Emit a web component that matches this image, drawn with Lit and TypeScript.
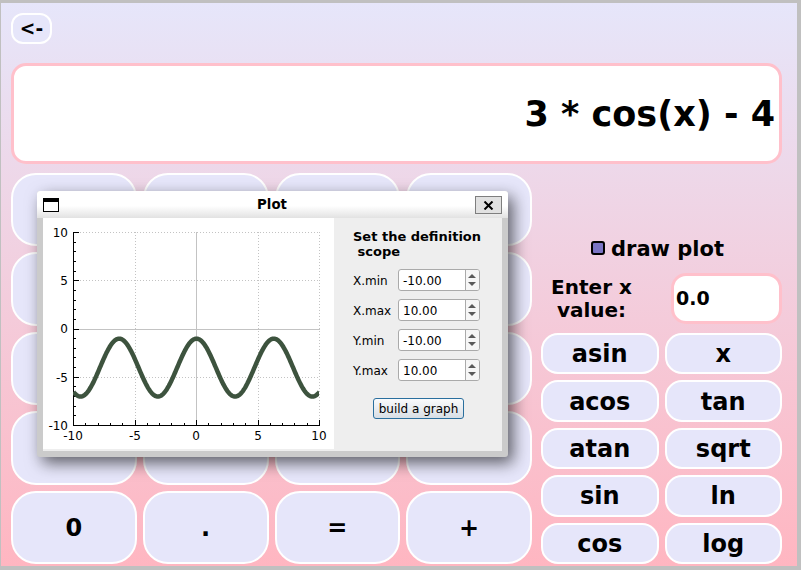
import { LitElement, html, svg, css } from "lit";
import { customElement, property } from "lit/decorators.js";

const X0 = 30.5, Y0 = 14.5, W = 246, H = 193;
const px = (v: number) => X0 + ((v + 10) / 20) * W;
const py = (v: number) => Y0 + ((10 - v) / 20) * H;
const snap = (v: number) => Math.floor(v) + 0.5;

@customElement("function-plot")
class FunctionPlot extends LitElement {
  static styles = css`
    :host { display: block; width: 291px; height: 231px; background: #fff; }
    svg { display: block; }
    text { font: 12px "DejaVu Sans", sans-serif; fill: #000; }
    .grid { stroke: #c3c3c3; stroke-dasharray: 1 2; }
    .zero { stroke: #c3c3c3; }
    .axis { stroke: #000; }
    .curve { fill: none; stroke: #3d533e; stroke-width: 4.5; stroke-linejoin: round; }
  `;
  render() {
    const majors = [-10, -5, 0, 5, 10];
    const all = Array.from({ length: 21 }, (_, i) => i - 10);
    const pts = Array.from({ length: 401 }, (_, i) => {
      const x = -10 + i / 20;
      return `${px(x).toFixed(2)},${py(3 * Math.cos(x) - 4).toFixed(2)}`;
    }).join(" ");
    const ax = snap(px(-10)), ay = snap(py(-10));
    return html`<svg width="291" height="231" viewBox="0 0 291 231">
      <defs><clipPath id="area"><rect x="30" y="14" width="246" height="194"></rect></clipPath></defs>
      ${majors.map((v) => svg`
        ${v > -10 ? svg`<line class=${v === 0 ? "zero" : "grid"} x1=${snap(px(v))} x2=${snap(px(v))} y1="14" y2="207"></line>
        <line class=${v === 0 ? "zero" : "grid"} x1="31" x2="277" y1=${snap(py(v))} y2=${snap(py(v))}></line>` : ""}`)}
      ${all.map((v) => {
        const len = v % 5 === 0 ? 6 : 3;
        return svg`<line class="axis" x1="30" x2=${30 + len} y1=${snap(py(v))} y2=${snap(py(v))}></line>
        <line class="axis" x1=${snap(px(v))} x2=${snap(px(v))} y1="208" y2=${208 - len}></line>`;
      })}
      <path class="axis" d="M${ax} 14V208M30 ${ay}H277"></path>
      <polyline class="curve" points=${pts} clip-path="url(#area)"></polyline>
      ${majors.map((v) => svg`
        <text x="25" y=${Math.floor(py(v)) + (v === 0 ? 4 : 5)} text-anchor="end">${v}</text>
        <text x=${Math.floor(px(v))} y="222" text-anchor="middle">${v}</text>`)}
    </svg>`;
  }
}

@customElement("spin-row")
class SpinRow extends LitElement {
  @property() label = "";
  @property() value = "";
  static styles = css`
    :host { display: flex; align-items: center; height: 22px; font: 12px "DejaVu Sans", sans-serif; }
    .label { width: 45px; padding-top: 2px; }
    .box { display: flex; box-sizing: border-box; width: 82px; height: 22px; border: 1px solid #aaa; border-radius: 3px; background: #fff; overflow: hidden; }
    .value { flex: 1; padding-left: 4px; line-height: 22px; }
    .steps { width: 13px; border-left: 1px solid #aaa; background: #f6f6f6; }
    .arrow { fill: #5a5a5a; }
    svg { display: block; }
  `;
  render() {
    return html`<span class="label">${this.label}</span>
      <span class="box"><span class="value">${this.value}</span>
        <span class="steps"><svg width="13" height="20" viewBox="0 0 13 20">
          <path class="arrow" d="M2 8L6 4L10 8ZM2 12L6 16L10 12Z"></path></svg></span></span>`;
  }
}

@customElement("plot-dialog")
class PlotDialog extends LitElement {
  static styles = css`
    :host { display: block; box-sizing: border-box; width: 471px; height: 266px; background: #cbcbcb; border-radius: 3px;
      box-shadow: 5px 6px 16px rgba(0, 0, 0, 0.6); font: 12px "DejaVu Sans", sans-serif; color: #000; }
    .bar { display: flex; align-items: center; justify-content: space-between; box-sizing: border-box; height: 27px; padding: 1px 6px 0;
      border-radius: 3px 3px 0 0; background: linear-gradient(#fff 0 55%, #e2e2e2); }
    .icon { box-sizing: border-box; width: 16px; height: 14px; border: 1px solid #000; border-top-width: 4px; background: #fff; }
    .title { font-size: 13.3px; font-weight: bold; padding-left: 10px; margin-top: -2px; }
    .close { display: grid; place-items: center; box-sizing: border-box; width: 27px; height: 18px; border: 1px solid #7e7e7e; background: #e1e1e1; }
    .x { stroke: #000; stroke-width: 2; fill: none; }
    .body { display: flex; height: 233px; margin: 0 6px; background: #eee; }
    .panel { flex: 1; padding: 11px 0 0 19px; }
    .heading { font-size: 13px; font-weight: bold; line-height: 15px; white-space: pre; height: 40px; }
    .rows { display: flex; flex-direction: column; gap: 8px; }
    .build { box-sizing: border-box; width: 91px; height: 21px; margin: 17px 0 0 20px; border: 1px solid #2a6f9e; border-radius: 3px;
      background: linear-gradient(#fafbfc, #d8dee5); line-height: 21px; text-align: center; white-space: nowrap; }
  `;
  render() {
    return html`
      <div class="bar"><span class="icon"></span><span class="title">Plot</span>
        <span class="close"><svg width="11" height="9" viewBox="0 0 11 9"><path class="x" d="M1.5 .5L9.5 8.5M9.5 .5L1.5 8.5"></path></svg></span></div>
      <div class="body"><function-plot></function-plot>
        <div class="panel"><div class="heading">Set the definition
 scope</div>
          <div class="rows">
            <spin-row label="X.min" value="-10.00"></spin-row>
            <spin-row label="X.max" value="10.00"></spin-row>
            <spin-row label="Y.min" value="-10.00"></spin-row>
            <spin-row label="Y.max" value="10.00"></spin-row>
          </div>
          <div class="build">build a graph</div>
        </div></div>`;
  }
}

const PAD = ["", "", "", "", "", "", "", "", "", "", "", "", "", "", "", "", "0", ".", "=", "+"];
const FUNCS = ["asin", "x", "acos", "tan", "atan", "sqrt", "sin", "ln", "cos", "log"];

@customElement("app-root")
class AppRoot extends LitElement {
  static styles = css`
    :host { display: block; box-sizing: border-box; position: relative; width: 801px; height: 570px; overflow: hidden;
      border: solid #c0c0c0; border-width: 3px 4px 4px 1px; padding: 10px 15px 2px 10px;
      background: linear-gradient(#e6e6fa, #ffb6c1) padding-box; font: bold 24px "DejaVu Sans", sans-serif; color: #000; }
    .key { display: flex; align-items: center; justify-content: center; box-sizing: border-box; min-width: 0; min-height: 0;
      border: 2px solid #fff; border-radius: 25px; background: #e6e6fa; line-height: 1; padding-top: 1px; }
    .back { width: 41px; height: 31px; border-radius: 12px; font-size: 18.6px; padding-top: 2px; }
    .display { box-sizing: border-box; height: 101px; margin-top: 19px; border: 3px solid #ffc0cb; border-radius: 15px; background: #fff;
      font-size: 35px; line-height: 97px; text-align: right; padding-right: 4px; }
    .main { display: flex; gap: 9px; height: 391px; margin-top: 9px; }
    .pad { display: grid; width: 521px; grid-template: repeat(5, 1fr) / repeat(4, 1fr); gap: 6px; }
    .side { width: 241px; display: flex; flex-direction: column; }
    .check { display: flex; align-items: center; gap: 6px; height: 30px; margin: 60px 0 0 50px; font-size: 21px; }
    .check-label { padding-top: 2px; }
    .tick { box-sizing: border-box; width: 14px; height: 14px; border: 2px solid #000; border-radius: 3px; background: #7b74c4; }
    .entry { display: flex; height: 51px; margin-top: 10px; }
    .caption { width: 101px; padding-right: 29px; font-size: 20px; line-height: 23px; text-align: center; padding-top: 3px; }
    .input { box-sizing: border-box; width: 111px; height: 51px; border: 3px solid #ffc0cb; border-radius: 15px; background: #fff;
      font-size: 19px; line-height: 45px; padding-left: 2px; }
    .funcs { display: grid; height: 231px; grid-template: repeat(5, 1fr) / 1fr 1fr; gap: 6px; margin-top: 9px; }
    .funcs .key { border-radius: 17px; }
    .dialog { position: absolute; left: 36px; top: 188px; }
  `;
  render() {
    return html`
      <div class="key back">&lt;-</div>
      <div class="display">3 * cos(x) - 4</div>
      <div class="main">
        <div class="pad">${PAD.map((k) => html`<div class="key">${k}</div>`)}</div>
        <div class="side">
          <div class="check"><span class="tick"></span><span class="check-label">draw plot</span></div>
          <div class="entry"><div class="caption">Enter x<br />value:</div><div class="input">0.0</div></div>
          <div class="funcs">${FUNCS.map((k) => html`<div class="key">${k}</div>`)}</div>
        </div>
      </div>
      <plot-dialog class="dialog"></plot-dialog>`;
  }
}
